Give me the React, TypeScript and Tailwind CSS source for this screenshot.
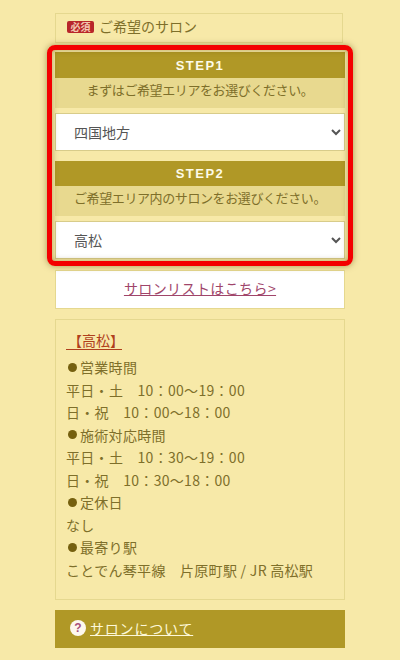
const font = { fontFamily: '"Noto Sans CJK JP", "Noto Sans", sans-serif' };

function Step({
  label,
  text,
  value,
  options,
  bar,
}: {
  label: string;
  text: string;
  value: string;
  options: string[];
  bar: string;
}) {
  return (
    <div>
      <div className={`${bar} bg-[#b09826] text-center text-[13px] font-bold tracking-[1.5px] text-[#fdfbe8] font-['Liberation_Sans',sans-serif]`}>
        {label}
      </div>
      <div className="h-[30px] bg-[#e8d98f] text-center text-[13px] leading-[23px] tracking-[-0.4px] text-[#7e6f2a]">{text}</div>
      <select
        defaultValue={value}
        className="mt-[5px] block h-[38px] w-full border border-[#d8cc8a] bg-white pl-[14px] pb-[1px] text-[14px] text-[#555]"
      >
        {options.map((o) => (
          <option key={o}>{o}</option>
        ))}
      </select>
    </div>
  );
}

function Line({ children, dot }: { children: React.ReactNode; dot?: boolean }) {
  return (
    <p className="flex h-[22.5px] items-center whitespace-pre text-[14px] leading-[22.5px] tracking-[0.3px] text-[#7e6f2a]">
      {dot && <span className="mr-[3px] ml-[2px] inline-block h-[9px] w-[9px] rounded-full bg-[#75600f]" />}
      {children}
    </p>
  );
}

export default function App() {
  return (
    <div className="relative h-[660px] w-[400px] overflow-hidden bg-[#f7e9a8]" style={font}>
      <div className="ml-[55px] flex w-[290px] flex-col pt-[13px]">
        <div className="flex h-[30px] w-[288px] items-center border border-[#e5d88f] pb-[3px] pl-[11px]">
          <span className="mr-[5px] flex h-[12px] w-[27px] items-center justify-center rounded-[2px] bg-[#b8262a] text-[10px] leading-none font-bold text-[#f3c8b0]">
            必須
          </span>
          <span className="text-[14px] text-[#7e6f2a]">ご希望のサロン</span>
        </div>

        <div className="mt-[9px]">
          <Step
            label="STEP1"
            text="まずはご希望エリアをお選びください。"
            value="四国地方"
            options={['四国地方']}
            bar="h-[26px] leading-[27px]"
          />
        </div>
        <div className="mt-[10px]">
          <Step
            label="STEP2"
            text="ご希望エリア内のサロンをお選びください。"
            value="高松"
            options={['高松']}
            bar="h-[25px] leading-[26px]"
          />
        </div>

        <div className="mt-[11px] flex h-[39px] items-center justify-center border border-[#e5d88f] bg-white pb-[3px]">
          <a className="text-[14px] tracking-[0.4px] text-[#a0456a] underline">サロンリストはこちら&gt;</a>
        </div>

        <div className="mt-[10px] h-[281px] border border-[#e5d88f] pt-[10px] pl-[10px]">
          <p className="mb-[6px] h-[20px] w-[56px] border-b border-[#b0401c] pl-[2px] text-[14px] leading-[20px] whitespace-nowrap text-[#b0401c]">
            【高松】
          </p>
          <Line dot>営業時間</Line>
          <Line>平日・土　10：00〜19：00</Line>
          <Line>日・祝　10：00〜18：00</Line>
          <Line dot>施術対応時間</Line>
          <Line>平日・土　10：30〜19：00</Line>
          <Line>日・祝　10：30〜18：00</Line>
          <Line dot>定休日</Line>
          <Line>なし</Line>
          <Line dot>最寄り駅</Line>
          <Line>ことでん琴平線　片原町駅 / JR 高松駅</Line>
        </div>

        <div className="mt-[10px] flex h-[38px] items-center bg-[#b09826] pb-[2px] pl-[15px]">
          <span className="mr-[4px] flex h-[16px] w-[16px] items-center justify-center rounded-full bg-[#fdf8ee] font-['Liberation_Sans',sans-serif] text-[12px] leading-none font-bold text-[#a8507a]">
            ?
          </span>
          <a className="text-[14px] tracking-[0.8px] text-[#fdf8d8] underline">サロンについて</a>
        </div>
      </div>

      {/* annotation over the form */}
      <div className="absolute top-[45px] left-[47px] h-[221px] w-[306px] rounded-[8px] border-[5px] border-[#f40000] shadow-[0_0_6px_rgba(90,70,0,0.5),inset_0_0_6px_rgba(90,70,0,0.45)]" />
    </div>
  );
}
